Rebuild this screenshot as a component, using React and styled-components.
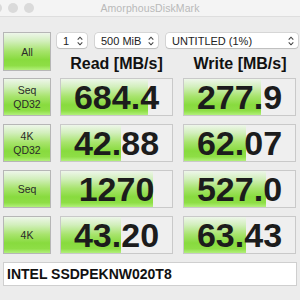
import React from "react";
import styled, { createGlobalStyle } from "styled-components";

const GlobalStyle = createGlobalStyle`
  html, body {
    margin: 0;
    padding: 0;
    background: #ececec;
  }
  body {
    font-family: "Liberation Sans", Arial, sans-serif;
  }
`;

const Window = styled.div`
  width: 300px;
  height: 300px;
  overflow: hidden;
  background: #ececec;
  display: flex;
  flex-direction: column;
`;

const TitleBar = styled.div`
  position: relative;
  height: 16px;
  flex: none;
  background: #f4f4f4;
  border-bottom: 1px solid #dedede;
  display: flex;
  align-items: center;
  justify-content: center;
`;

const Lights = styled.div`
  position: absolute;
  left: -8px;
  top: 3px;
  display: flex;
  gap: 6px;
`;

const Light = styled.span`
  width: 10px;
  height: 10px;
  border-radius: 50%;
  background: #dadada;
`;

const Title = styled.div`
  font-size: 10.5px;
  color: #b9b9b9;
  letter-spacing: 0.1px;
`;

const Body = styled.div`
  padding: 15px 3px 0 3px;
  display: flex;
  flex-direction: column;
`;

const Top = styled.div`
  display: flex;
  gap: 6px;
  height: 39px;
`;

const greenFill = `linear-gradient(to bottom,
  #eef6ea 0%,
  #d2efbc 22%,
  #a8e46e 48%,
  #88db3e 72%,
  #8ede46 88%,
  #b2f07c 100%)`;

const GreenButton = styled.div`
  width: 46px;
  height: ${(p) => p.$h}px;
  flex: none;
  border: 1px solid #b6b6b6;
  background: ${greenFill};
  display: flex;
  flex-direction: column;
  align-items: center;
  justify-content: center;
  font-size: 10.5px;
  line-height: 14px;
  color: #2a2a2a;
  text-align: center;
`;

const TopRight = styled.div`
  flex: 1;
  display: flex;
  flex-direction: column;
`;

const Selects = styled.div`
  display: flex;
  gap: 8px;
  margin-top: 1px;
`;

const Select = styled.div`
  width: ${(p) => p.$w}px;
  height: 15px;
  box-sizing: border-box;
  background: #ffffff;
  border-radius: 3px;
  box-shadow: 0 0 0 0.5px rgba(0, 0, 0, 0.18), 0 1px 1px rgba(0, 0, 0, 0.12);
  display: flex;
  align-items: center;
  justify-content: space-between;
  padding: 0 4px 0 6px;
  font-size: 11px;
  color: #222;
`;

const Headers = styled.div`
  display: grid;
  grid-template-columns: 113px 114px;
  column-gap: 10px;
  margin: 7px 0 0 3px;
`;

const Header = styled.div`
  text-align: center;
  font-weight: bold;
  font-size: 16px;
  line-height: 18px;
  color: #111;
`;

const Rows = styled.div`
  margin-top: 7px;
  display: flex;
  flex-direction: column;
  gap: 8px;
`;

const Row = styled.div`
  display: grid;
  grid-template-columns: 48px 113px 114px;
  column-gap: 9px;
  height: 38px;
  & > :last-child {
    margin-left: 1px;
  }
`;

const Cell = styled.div`
  position: relative;
  border: 1px solid #c9c9c9;
  background: #efefef;
  display: flex;
  align-items: center;
  justify-content: center;
  overflow: hidden;
`;

const Bar = styled.div`
  position: absolute;
  left: 0;
  top: 0;
  bottom: 0;
  background: ${greenFill};
`;

const Value = styled.span`
  position: relative;
  font-weight: bold;
  font-size: 34px;
  line-height: 38px;
  color: #1c1c1c;
`;

const Model = styled.div`
  margin-top: 8px;
  height: 22px;
  border: 1px solid #cfcfcf;
  background: #ffffff;
  display: flex;
  align-items: center;
  padding-left: 3px;
  font-weight: bold;
  font-size: 14px;
  color: #111;
`;

const Chevrons = () => (
  <svg width="6" height="10" viewBox="0 0 6 10" fill="none" stroke="#444" strokeWidth="1.1">
    <path d="M0.7 3.6 L3 1.2 L5.3 3.6" />
    <path d="M0.7 6.4 L3 8.8 L5.3 6.4" />
  </svg>
);

const results = [
  { label: ["Seq", "QD32"], read: "684.4", readPct: 78, write: "277.9", writePct: 69 },
  { label: ["4K", "QD32"], read: "42.88", readPct: 54, write: "62.07", writePct: 56 },
  { label: ["Seq"], read: "1270", readPct: 83, write: "527.0", writePct: 74 },
  { label: ["4K"], read: "43.20", readPct: 54, write: "63.43", writePct: 56 },
];

export default function App() {
  return (
    <Window>
      <GlobalStyle />
      <TitleBar>
        <Lights>
          <Light />
          <Light />
          <Light />
        </Lights>
        <Title>AmorphousDiskMark</Title>
      </TitleBar>
      <Body>
        <Top>
          <GreenButton $h={37}>All</GreenButton>
          <TopRight>
            <Selects>
              <Select $w={30}>
                1 <Chevrons />
              </Select>
              <Select $w={63}>
                500 MiB <Chevrons />
              </Select>
              <Select $w={132}>
                UNTITLED (1%) <Chevrons />
              </Select>
            </Selects>
            <Headers>
              <Header>Read [MB/s]</Header>
              <Header>Write [MB/s]</Header>
            </Headers>
          </TopRight>
        </Top>
        <Rows>
          {results.map((r) => (
            <Row key={r.label.join(" ")}>
              <GreenButton $h={36}>
                {r.label.map((l) => (
                  <span key={l}>{l}</span>
                ))}
              </GreenButton>
              <Cell>
                <Bar style={{ width: `${r.readPct}%` }} />
                <Value>{r.read}</Value>
              </Cell>
              <Cell>
                <Bar style={{ width: `${r.writePct}%` }} />
                <Value>{r.write}</Value>
              </Cell>
            </Row>
          ))}
        </Rows>
        <Model>INTEL SSDPEKNW020T8</Model>
      </Body>
    </Window>
  );
}
